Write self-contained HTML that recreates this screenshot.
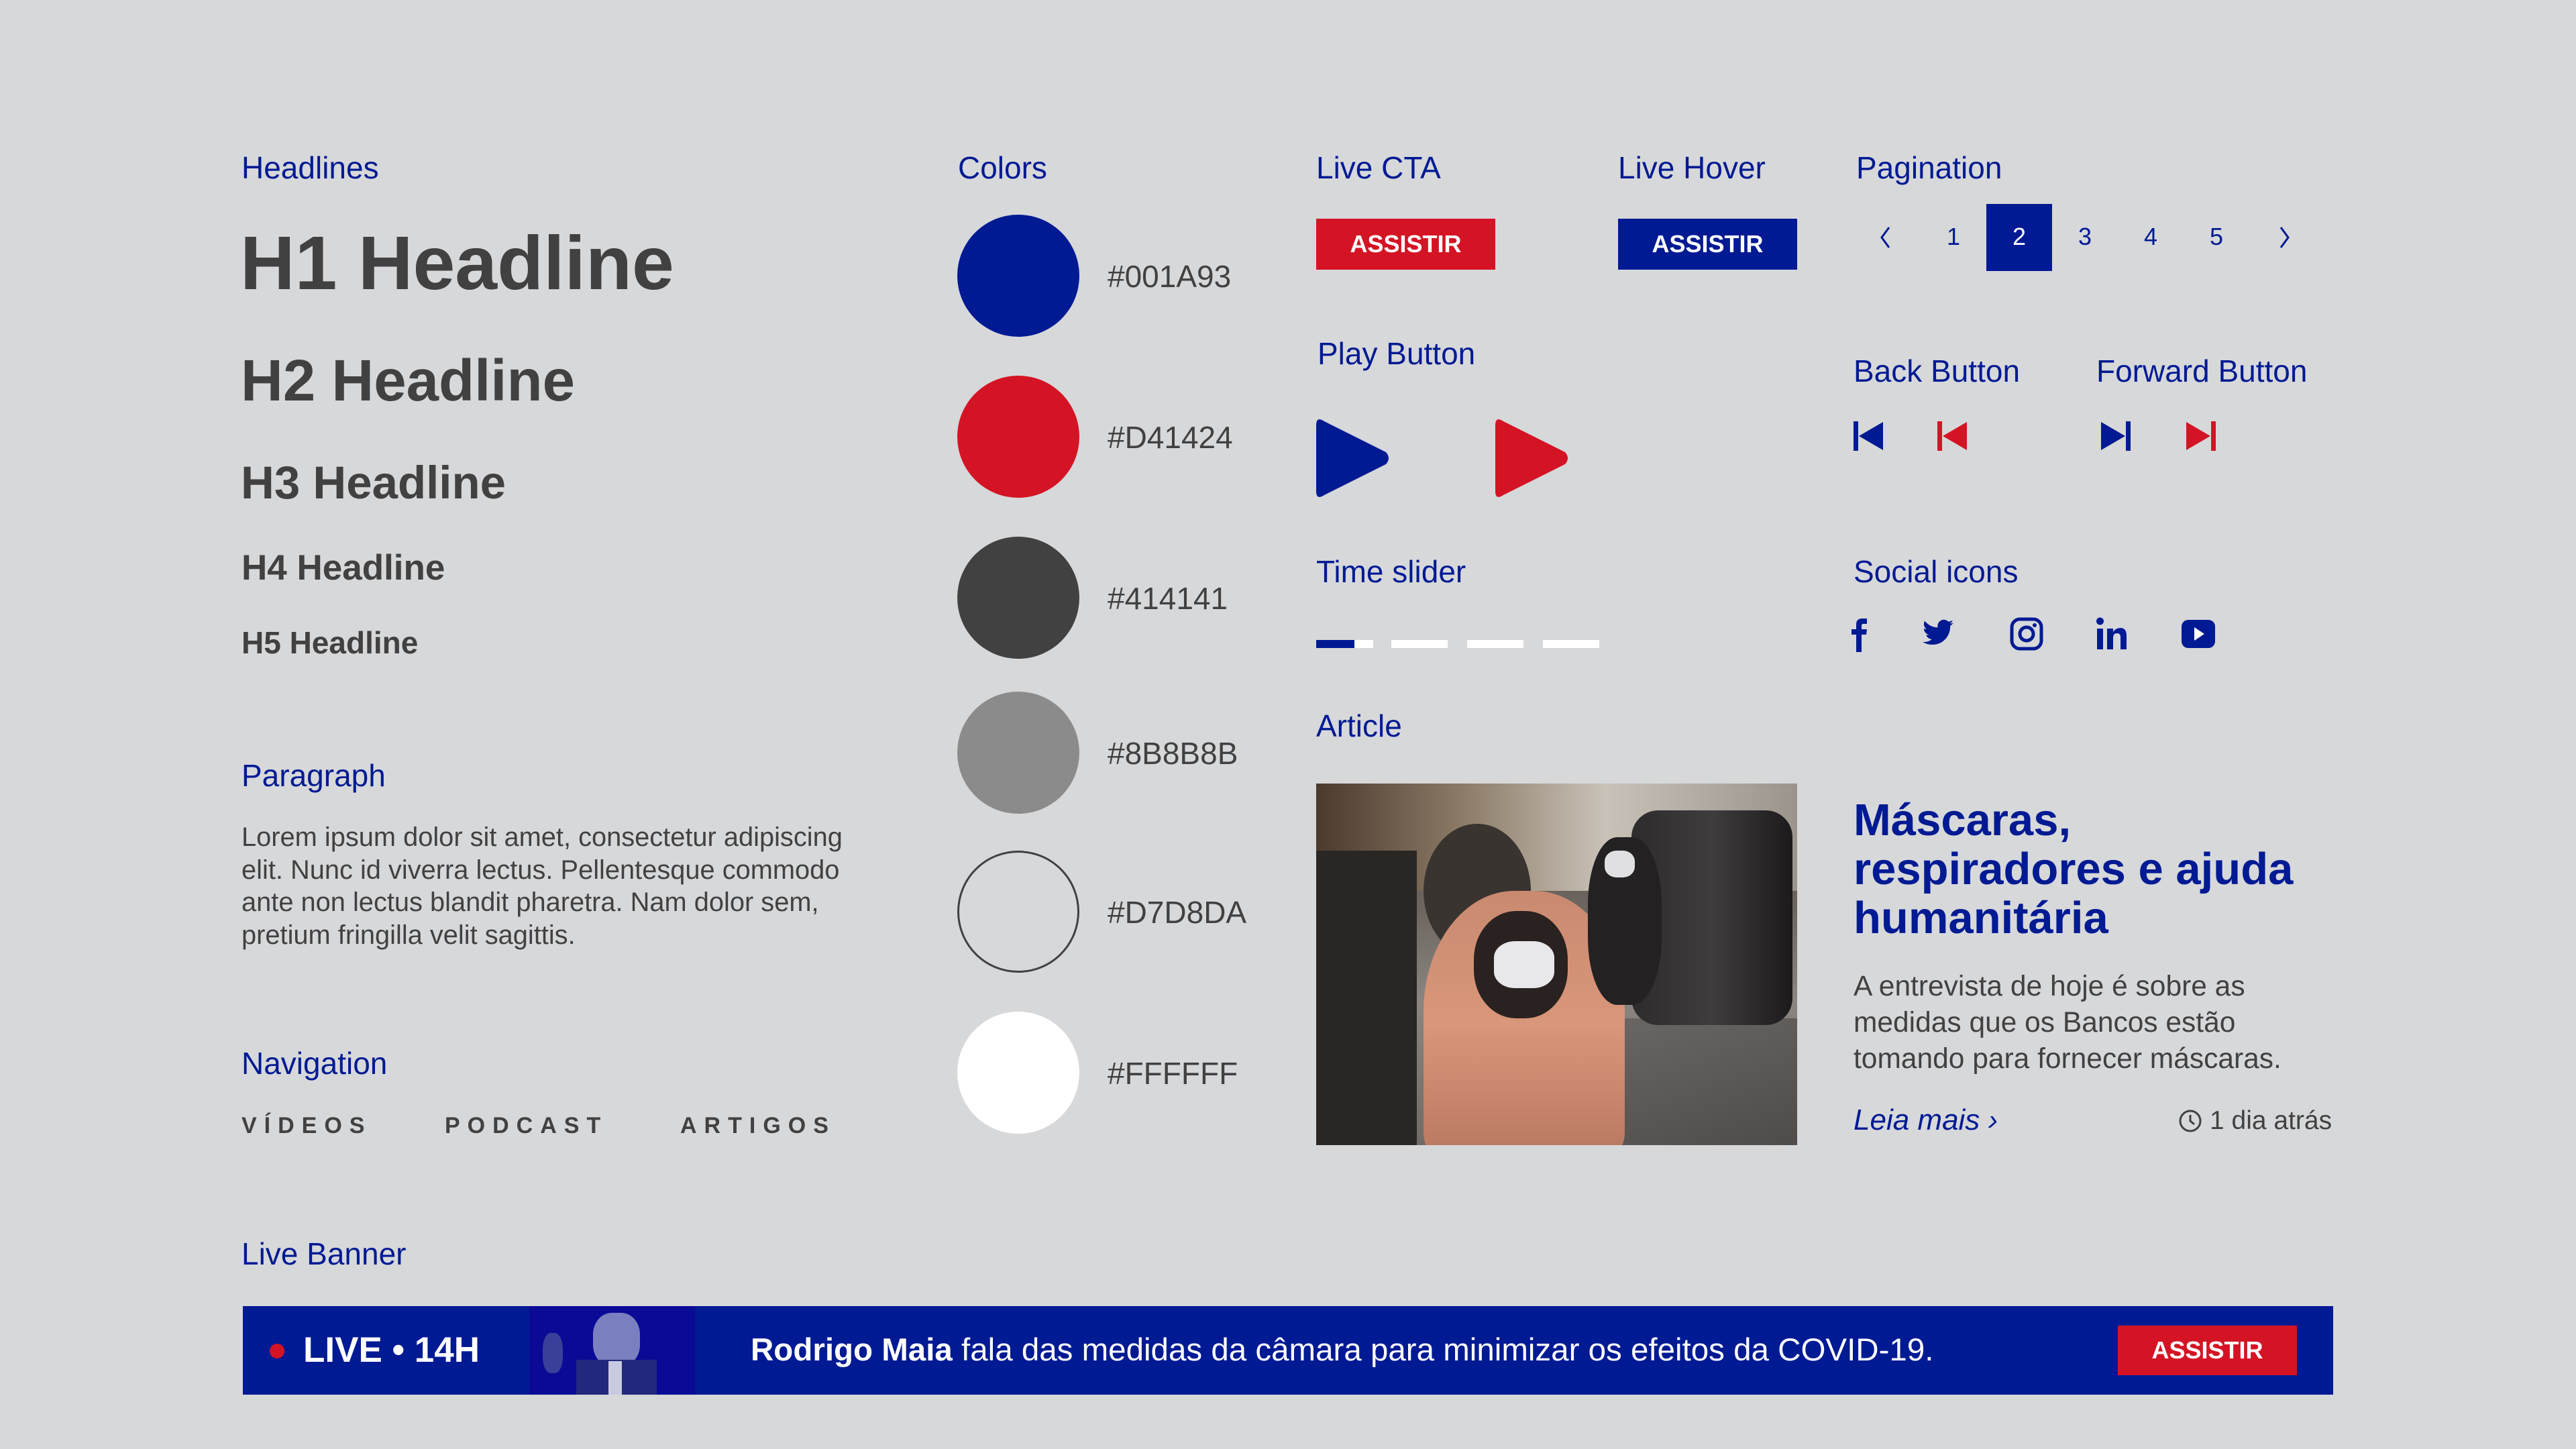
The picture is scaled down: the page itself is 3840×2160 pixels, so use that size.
<!DOCTYPE html>
<html><head><meta charset="utf-8"><style>
*{margin:0;padding:0;box-sizing:border-box}
body{width:3840px;height:2160px;background:#d7d8da;font-family:"Liberation Sans",sans-serif;position:relative;overflow:hidden;color:#414141}
.a{position:absolute;white-space:nowrap}
.lb{color:#001a93;font-size:46px;line-height:56px}
.h{font-weight:bold;color:#414141}
.c{position:absolute;width:182px;height:182px;border-radius:50%;left:1427px}
.hex{position:absolute;left:1651px;font-size:46px;line-height:52px;color:#414141}
.btn{position:absolute;height:76px;width:267px;color:#fff;font-weight:bold;font-size:36px;line-height:76px;text-align:center}
.pg{position:absolute;top:325px;font-size:36px;line-height:56px;color:#001a93;width:60px;text-align:center}
.bar{position:absolute;top:954px;height:12px;background:#fff}
</style></head><body>

<div class="a lb" style="left:360px;top:222px">Headlines</div>
<div class="a h" style="left:358px;top:327px;font-size:113px;line-height:130px">H1 Headline</div>
<div class="a h" style="left:359px;top:518px;font-size:87px;line-height:100px">H2 Headline</div>
<div class="a h" style="left:359px;top:680px;font-size:69px;line-height:80px">H3 Headline</div>
<div class="a h" style="left:360px;top:817px;font-size:53px;line-height:60px">H4 Headline</div>
<div class="a h" style="left:360px;top:931px;font-size:46px;line-height:54px">H5 Headline</div>

<div class="a lb" style="left:360px;top:1128px">Paragraph</div>
<div class="a" style="left:360px;top:1224px;font-size:39.8px;line-height:48.5px">Lorem ipsum dolor sit amet, consectetur adipiscing<br>elit. Nunc id viverra lectus. Pellentesque commodo<br>ante non lectus blandit pharetra. Nam dolor sem,<br>pretium fringilla velit sagittis.</div>

<div class="a lb" style="left:360px;top:1557px">Navigation</div>
<div class="a h" style="left:360px;top:1658px;font-size:34px;line-height:40px;letter-spacing:11px">VÍDEOS</div>
<div class="a h" style="left:663px;top:1658px;font-size:34px;line-height:40px;letter-spacing:11px">PODCAST</div>
<div class="a h" style="left:1014px;top:1658px;font-size:34px;line-height:40px;letter-spacing:11px">ARTIGOS</div>

<div class="a lb" style="left:360px;top:1841px">Live Banner</div>
<div class="a" style="left:362px;top:1947px;width:3116px;height:132px;background:#001a93">
  <div class="a" style="left:40px;top:56px;width:22px;height:22px;border-radius:50%;background:#d41424"></div>
  <div class="a" style="left:90px;top:37px;font-size:53px;line-height:58px;color:#fff;font-weight:bold">LIVE • 14H</div>
  <div class="a" style="left:427px;top:0;width:247px;height:132px;background:#0a0a96;overflow:hidden">
    <div class="a" style="left:95px;top:10px;width:70px;height:80px;border-radius:40%;background:#7a7fbf"></div>
    <div class="a" style="left:70px;top:80px;width:120px;height:60px;background:#23287f"></div>
    <div class="a" style="left:118px;top:82px;width:20px;height:50px;background:#c8cae0"></div>
    <div class="a" style="left:20px;top:40px;width:30px;height:60px;border-radius:40%;background:#3a3f9a"></div>
  </div>
  <div class="a" style="left:757px;top:38px;font-size:47.5px;line-height:56px;color:#fff"><b>Rodrigo Maia</b> fala das medidas da câmara para minimizar os efeitos da COVID-19.</div>
  <div class="btn" style="left:2795px;top:29px;background:#d41424;width:267px;height:74px;line-height:74px">ASSISTIR</div>
</div>

<div class="a lb" style="left:1428px;top:222px">Colors</div>
<div class="c" style="top:320px;background:#001a93"></div>
<div class="c" style="top:560px;background:#d41424"></div>
<div class="c" style="top:800px;background:#414141"></div>
<div class="c" style="top:1031px;background:#8b8b8b"></div>
<div class="c" style="top:1268px;border:3px solid #414141"></div>
<div class="c" style="top:1508px;background:#fff"></div>
<div class="hex" style="top:386px">#001A93</div>
<div class="hex" style="top:626px">#D41424</div>
<div class="hex" style="top:866px">#414141</div>
<div class="hex" style="top:1097px">#8B8B8B</div>
<div class="hex" style="top:1334px">#D7D8DA</div>
<div class="hex" style="top:1574px">#FFFFFF</div>

<div class="a lb" style="left:1962px;top:222px">Live CTA</div>
<div class="btn" style="left:1962px;top:326px;background:#d41424">ASSISTIR</div>
<div class="a lb" style="left:2412px;top:222px">Live Hover</div>
<div class="btn" style="left:2412px;top:326px;background:#001a93">ASSISTIR</div>

<div class="a lb" style="left:2767px;top:222px">Pagination</div>
<div class="a" style="left:2961px;top:304px;width:98px;height:100px;background:#001a93"></div>
<div class="pg" style="left:2882px">1</div>
<div class="pg" style="left:2980px;color:#fff">2</div>
<div class="pg" style="left:3078px">3</div>
<div class="pg" style="left:3176px">4</div>
<div class="pg" style="left:3274px">5</div>
<svg class="a" style="left:2796px;top:333px" width="30" height="42"><path d="M20 6 L9 21 L20 36" fill="none" stroke="#001a93" stroke-width="3"/></svg>
<svg class="a" style="left:3390px;top:333px" width="30" height="42"><path d="M10 6 L21 21 L10 36" fill="none" stroke="#001a93" stroke-width="3"/></svg>

<div class="a lb" style="left:1964px;top:499px">Play Button</div>
<svg class="a" style="left:1962px;top:620px" width="112" height="126"><path d="M0 14 Q0 0 12 8 L104 54 Q112 63 104 72 L12 118 Q0 126 0 112Z" fill="#001a93"/></svg>
<svg class="a" style="left:2229px;top:620px" width="112" height="126"><path d="M0 14 Q0 0 12 8 L104 54 Q112 63 104 72 L12 118 Q0 126 0 112Z" fill="#d41424"/></svg>

<div class="a lb" style="left:2763px;top:525px">Back Button</div>
<div class="a lb" style="left:3125px;top:525px">Forward Button</div>
<svg class="a" style="left:2763px;top:627px" width="46" height="46"><rect x="0" y="1" width="7" height="44" fill="#001a93"/><path d="M44 2 L8 23 L44 44Z" fill="#001a93"/></svg>
<svg class="a" style="left:2888px;top:627px" width="46" height="46"><rect x="0" y="1" width="7" height="44" fill="#d41424"/><path d="M44 2 L8 23 L44 44Z" fill="#d41424"/></svg>
<svg class="a" style="left:3130px;top:627px" width="46" height="46"><rect x="39" y="1" width="7" height="44" fill="#001a93"/><path d="M2 2 L38 23 L2 44Z" fill="#001a93"/></svg>
<svg class="a" style="left:3257px;top:627px" width="46" height="46"><rect x="39" y="1" width="7" height="44" fill="#d41424"/><path d="M2 2 L38 23 L2 44Z" fill="#d41424"/></svg>

<div class="a lb" style="left:1962px;top:824px">Time slider</div>
<div class="bar" style="left:1962px;width:85px"></div>
<div class="bar" style="left:1962px;width:57px;background:#001a93"></div>
<div class="bar" style="left:2074px;width:84px"></div>
<div class="bar" style="left:2187px;width:84px"></div>
<div class="bar" style="left:2300px;width:84px"></div>

<div class="a lb" style="left:2763px;top:824px">Social icons</div>
<svg class="a" style="left:2757px;top:920px" width="30" height="52"><path d="M10 52 V26 H3 V18 H10 V11 Q10 2 19 2 H26 V10 H20 Q18 10 18 13 V18 H26 L25 26 H18 V52Z" fill="#001a93"/></svg>
<svg class="a" style="left:2864px;top:922px" width="50" height="46" viewBox="0 0 24 22"><path d="M23 3 a9 9 0 0 1-2.6.7 4.6 4.6 0 0 0 2-2.5 9 9 0 0 1-2.9 1.1A4.5 4.5 0 0 0 11.8 6.4 12.8 12.8 0 0 1 2.5 1.7a4.5 4.5 0 0 0 1.4 6 4.5 4.5 0 0 1-2-.6 4.5 4.5 0 0 0 3.6 4.5 4.5 4.5 0 0 1-2 .1 4.5 4.5 0 0 0 4.2 3.1A9 9 0 0 1 1 16.7a12.8 12.8 0 0 0 6.9 2c8.3 0 12.8-6.9 12.8-12.8v-.6A9 9 0 0 0 23 3z" fill="#001a93"/></svg>
<svg class="a" style="left:2996px;top:920px" width="50" height="50"><rect x="3" y="3" width="44" height="44" rx="12" fill="none" stroke="#001a93" stroke-width="5"/><circle cx="25" cy="25" r="10" fill="none" stroke="#001a93" stroke-width="5"/><circle cx="37" cy="12" r="3" fill="#001a93"/></svg>
<svg class="a" style="left:3124px;top:920px" width="48" height="50"><rect x="2" y="17" width="9" height="31" fill="#001a93"/><circle cx="6.5" cy="6" r="5.5" fill="#001a93"/><path d="M17 17 H26 V22 Q30 16 37 16 Q46 16 46 28 V48 H37 V30 Q37 24 32 24 Q26 24 26 31 V48 H17Z" fill="#001a93"/></svg>
<svg class="a" style="left:3252px;top:924px" width="50" height="42"><rect x="0" y="0" width="50" height="42" rx="10" fill="#001a93"/><path d="M19 11 L34 21 L19 31Z" fill="#fff"/></svg>

<div class="a lb" style="left:1962px;top:1054px">Article</div>
<div class="a" style="left:1962px;top:1168px;width:717px;height:539px;overflow:hidden;background:linear-gradient(180deg,#5a5048 0%,#6d6660 35%,#8a8580 60%,#6e6a66 100%)">
  <div class="a" style="left:0;top:0;width:717px;height:160px;background:linear-gradient(90deg,#4a3a2e,#8b7a66 30%,#c9c2b8 60%,#9a948c)"></div>
  <div class="a" style="left:300px;top:350px;width:417px;height:189px;background:linear-gradient(160deg,#6f6b68,#4e4b49)"></div>
  <div class="a" style="left:0;top:100px;width:150px;height:439px;background:#2a2624"></div>
  <div class="a" style="left:470px;top:40px;width:240px;height:320px;background:linear-gradient(90deg,#2d2b2c,#3e3c3d,#1c1a1b);border-radius:40px"></div>
  <div class="a" style="left:160px;top:60px;width:160px;height:200px;border-radius:50%;background:#3a3430"></div>
  <div class="a" style="left:160px;top:160px;width:300px;height:400px;border-radius:45% 45% 10% 10%;background:linear-gradient(180deg,#c98a70,#d9967a 50%,#b97760)"></div>
  <div class="a" style="left:235px;top:190px;width:140px;height:160px;border-radius:45%;background:#2a2220"></div>
  <div class="a" style="left:265px;top:235px;width:90px;height:70px;border-radius:35%;background:#e8e8ea"></div>
  <div class="a" style="left:405px;top:80px;width:110px;height:250px;border-radius:40%;background:#242123"></div>
  <div class="a" style="left:430px;top:100px;width:45px;height:40px;border-radius:40%;background:#e0e0e2"></div>
</div>

<div class="a" style="left:2763px;top:1186px;font-size:67px;line-height:73px;font-weight:bold;color:#001a93">Máscaras,<br>respiradores e ajuda<br>humanitária</div>
<div class="a" style="left:2763px;top:1444px;font-size:42.5px;line-height:54px;color:#414141">A entrevista de hoje é sobre as<br>medidas que os Bancos estão<br>tomando para fornecer máscaras.</div>
<div class="a" style="left:2763px;top:1644px;font-size:44px;line-height:52px;color:#001a93;font-style:italic">Leia mais ›</div>
<svg class="a" style="left:3246px;top:1652px" width="38" height="38"><circle cx="19" cy="19" r="15" fill="none" stroke="#414141" stroke-width="3"/><path d="M19 10 V19 L25 24" fill="none" stroke="#414141" stroke-width="3"/></svg>
<div class="a" style="left:3294px;top:1648px;font-size:39px;line-height:46px;color:#414141">1 dia atrás</div>

</body></html>
